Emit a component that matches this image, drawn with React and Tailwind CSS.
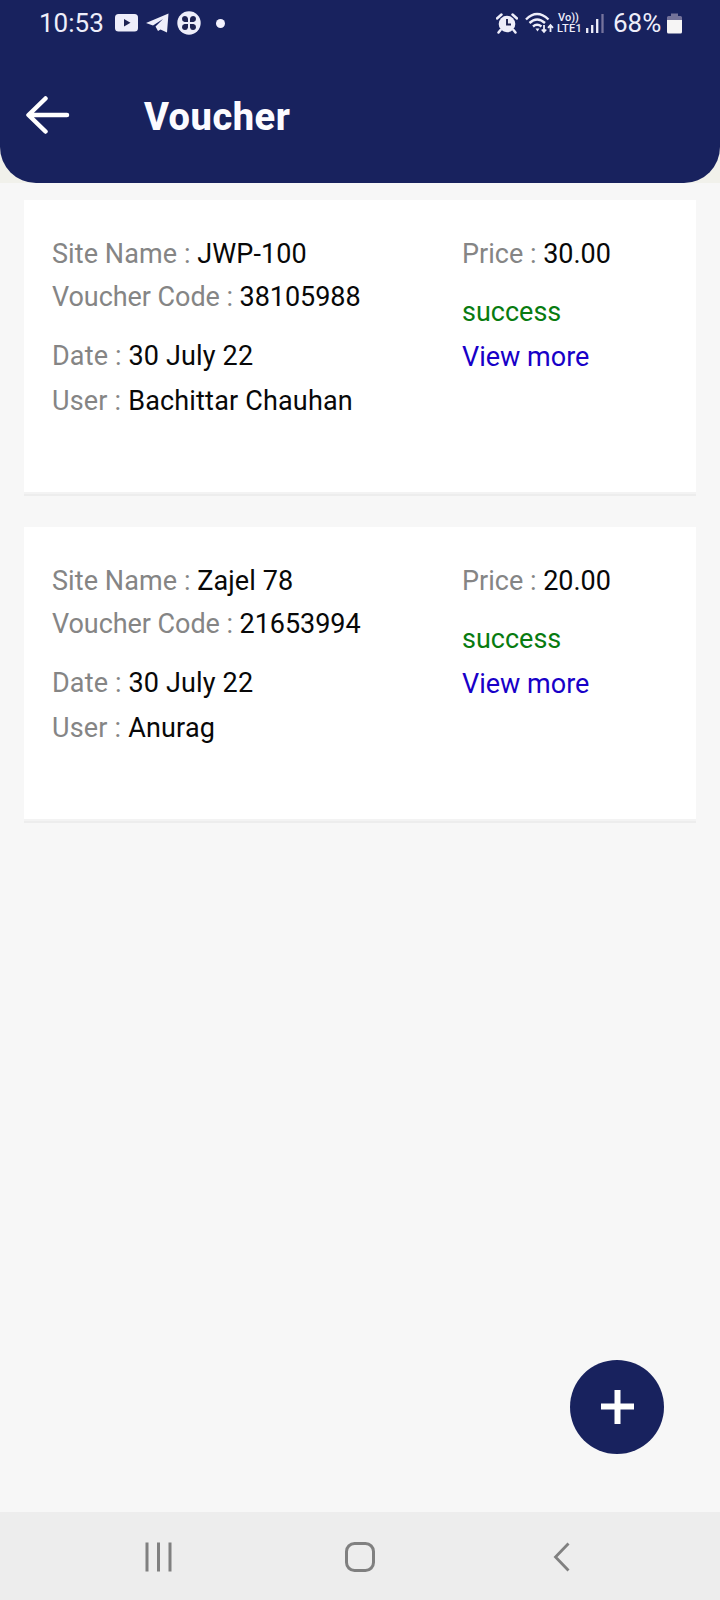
const vouchers = [
  { site: "JWP-100", code: "38105988", date: "30 July 22", user: "Bachittar Chauhan", price: "30.00", status: "success" },
  { site: "Zajel 78", code: "21653994", date: "30 July 22", user: "Anurag", price: "20.00", status: "success" },
];

function StatusBar() {
  return (
    <div className="flex h-[46px] items-center justify-between pl-[39px] pr-[38px] text-[#eeeefa]">
      <div className="flex items-center">
        <span className="w-[65px] whitespace-nowrap text-[26px] leading-[46px]">10:53</span>
        <svg className="ml-[11px]" width="23" height="18" viewBox="0 0 23 18">
          <rect width="23" height="17.5" rx="3.5" fill="currentColor" />
          <path d="M9 5v7.5l6.5-3.75z" fill="#1e2352" />
        </svg>
        <svg className="ml-[8px]" width="23" height="20" viewBox="0 0 23 20">
          <path d="M0 10L22.500 .5 21 19.500 14.500 16.500 12 18 9.500 13.500 17 6 7 12.500z" fill="currentColor" />
        </svg>
        <svg className="ml-[8px]" width="24" height="24" viewBox="0 0 24 24">
          <circle cx="12" cy="12" r="11.700" fill="currentColor" />
          <g fill="#1e2352">
            <path d="M11 11H7.500a3 3 0 0 1-2.500-3 3.100 3.100 0 0 1 3-3 3 3 0 0 1 3 2.500z" />
            <path d="M13 11h3.500a3 3 0 0 0 2.500-3 3.100 3.100 0 0 0-3-3 3 3 0 0 0-3 2.500z" />
            <path d="M11 13H7.500a3 3 0 0 0-2.500 3 3.100 3.100 0 0 0 3 3 3 3 0 0 0 3-2.500z" />
            <path d="M13 13h3.500a3 3 0 0 1 2.500 3 3.100 3.100 0 0 1-3 3 3 3 0 0 1-3-2.500z" />
          </g>
        </svg>
        <span className="ml-[15px] h-[9px] w-[9px] rounded-full bg-[#f4f2ff]" />
      </div>
      <div className="flex items-center">
        <svg width="22" height="21" viewBox="0 0 22 21">
          <circle cx="11" cy="11" r="8.300" fill="currentColor" />
          <path d="M1 5.500L5.500 1.500M21 5.500L16.500 1.500M4.500 17L2.500 19.500M17.500 17l2 2.500" stroke="currentColor" strokeWidth="2.500" strokeLinecap="round" />
          <path d="M11 6v5.500h4" fill="none" stroke="#1e2352" strokeWidth="1.900" />
        </svg>
        <svg className="ml-[7px]" width="30" height="22" viewBox="0 0 30 22">
          <g fill="none" stroke="currentColor" strokeWidth="2.400">
            <path d="M1 7.500Q12-3.500 23.500 7.500" />
            <path d="M4.500 11Q12 4 20 11" />
            <path d="M8 14.500Q12 11 16.500 14.500" />
          </g>
          <path d="M10.500 16.500h4l-2 3z" fill="currentColor" />
          <path d="M19 13v6.500M16.800 17.500l2.200 2.500 2.200-2.500M25.500 20v-6.500M23 15.800l2.500-2.800 2.500 2.800" fill="none" stroke="currentColor" strokeWidth="1.800" />
        </svg>
        <div className="flex w-[29px] flex-col items-center text-[11px] font-medium leading-[11px]">
          <span className="pr-0.5">Vo))</span>
          <span className="whitespace-nowrap tracking-[0.3px]">LTE1</span>
        </div>
        <svg className="ml-[2px]" width="18" height="20" viewBox="0 0 18 20">
          <path d="M1.200 20v-5M6.200 20v-8M11.200 20V6" stroke="currentColor" strokeWidth="2.300" />
          <path d="M16.500 20V1" stroke="#76739d" strokeWidth="2.300" />
        </svg>
        <span className="ml-[9px] w-[50px] whitespace-nowrap text-[26px] leading-[46px]">68%</span>
        <svg className="ml-[4px]" width="15" height="21" viewBox="0 0 15 21">
          <path d="M0 7V4.500Q0 3 1.500 3H4V.500h7V3h2.500Q15 3 15 4.500V7z" fill="#74739a" />
          <path d="M0 7h15v12q0 1.500-1.500 1.500h-12Q0 20.500 0 19z" fill="#f6f5f5" />
        </svg>
      </div>
    </div>
  );
}

function Field({ label, value, className }) {
  return (
    <p className={className}>
      <span className="text-[#858585]">{label} : </span>
      {value}
    </p>
  );
}

function VoucherCard({ site, code, date, user, price, status }) {
  return (
    <article className="flex h-[292px] bg-white px-7 pt-[38px] text-[27px] leading-8 whitespace-nowrap text-[#080808] shadow-[0_2px_0_0_#f3f3f3,0_4px_0_0_#ededed]">
      <div className="w-[410px]">
        <Field label="Site Name" value={site} className="tracking-[0.08px]" />
        <Field label="Voucher Code" value={code} className="mt-[11px] tracking-[-0.06px]" />
        <Field label="Date" value={date} className="mt-[27px] tracking-[0.15px]" />
        <Field label="User" value={user} className="mt-[13px] tracking-[0.18px]" />
      </div>
      <div>
        <Field label="Price" value={price} />
        <p className="mt-[26px] text-[#087b10]">{status}</p>
        <button className="mt-[13px] block text-[#1800c8]">View more</button>
      </div>
    </article>
  );
}

export default function App() {
  return (
    <div className="flex h-[1600px] w-[720px] flex-col overflow-hidden bg-[#f7f7f7] font-['Roboto',sans-serif]">
      <div className="bg-[#f1f1eb]">
        <header className="h-[183px] rounded-b-[36px] bg-[#18225e]">
          <StatusBar />
          <div className="flex h-[137px] items-center pl-[26px]">
            <svg width="44" height="38" viewBox="0 0 44 38" fill="none" stroke="#fff" strokeWidth="4.500" strokeLinecap="round" strokeLinejoin="round">
              <path d="M19.500 2.500L2.500 19l17 16.500M3 19h38" />
            </svg>
            <h1 className="ml-[74px] pt-1 text-[38px] leading-[48px] font-extrabold tracking-[0.5px] text-[#fcfbff]">Voucher</h1>
          </div>
        </header>
      </div>
      <main className="flex flex-1 flex-col px-6 pt-[17px]">
        <div className="flex flex-col gap-[35px]">
          {vouchers.map((v) => (
            <VoucherCard key={v.code} {...v} />
          ))}
        </div>
        <button className="mt-auto mr-8 mb-[58px] flex size-[94px] items-center justify-center self-end rounded-full bg-[#18225e]">
          <svg width="34" height="34" viewBox="0 0 34 34" stroke="#fff" strokeWidth="6">
            <path d="M17.500 0v34M1 16.500h33" />
          </svg>
        </button>
      </main>
      <nav className="flex h-[88px] items-center bg-[#ededed] pt-px pl-[145px]">
        <svg width="28" height="30" viewBox="0 0 28 30" stroke="#808080" strokeWidth="3">
          <path d="M2 .500v29M13.500 .500v29M25 .500v29" />
        </svg>
        <svg className="ml-[172px]" width="30" height="30" viewBox="0 0 30 30" fill="none" stroke="#808080" strokeWidth="3">
          <rect x="1.500" y="1.500" width="27" height="27" rx="8" />
        </svg>
        <svg className="ml-[178px]" width="17" height="30" viewBox="0 0 17 30" fill="none" stroke="#808080" strokeWidth="2.800">
          <path d="M15.500 1.500L2.500 15l13 13.500" />
        </svg>
      </nav>
    </div>
  );
}
